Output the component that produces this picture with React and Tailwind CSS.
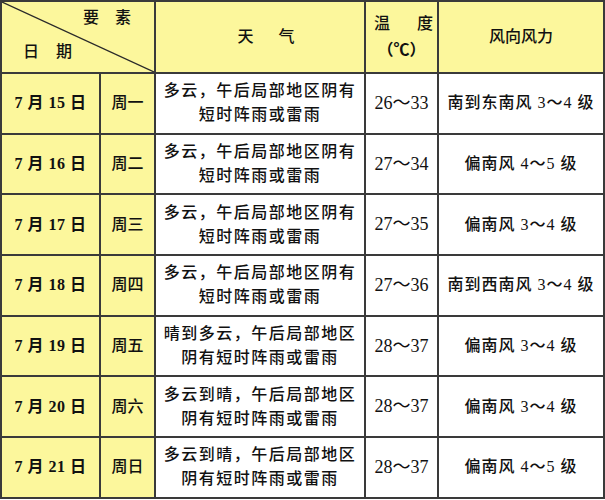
const rows = [
  { date: "7月15日", week: "周一", weather: ["多云，午后局部地区阴有", "短时阵雨或雷雨"], temp: "26～33", wind: "南到东南风3～4级" },
  { date: "7月16日", week: "周二", weather: ["多云，午后局部地区阴有", "短时阵雨或雷雨"], temp: "27～34", wind: "偏南风4～5级" },
  { date: "7月17日", week: "周三", weather: ["多云，午后局部地区阴有", "短时阵雨或雷雨"], temp: "27～35", wind: "偏南风3～4级" },
  { date: "7月18日", week: "周四", weather: ["多云，午后局部地区阴有", "短时阵雨或雷雨"], temp: "27～36", wind: "南到西南风3～4级" },
  { date: "7月19日", week: "周五", weather: ["晴到多云，午后局部地区", "阴有短时阵雨或雷雨"], temp: "28～37", wind: "偏南风3～4级" },
  { date: "7月20日", week: "周六", weather: ["多云到晴，午后局部地区", "阴有短时阵雨或雷雨"], temp: "28～37", wind: "偏南风3～4级" },
  { date: "7月21日", week: "周日", weather: ["多云到晴，午后局部地区", "阴有短时阵雨或雷雨"], temp: "28～37", wind: "偏南风4～5级" },
];

const cell = "border-2 border-[#3a3a3a] p-0 text-center align-middle";
const yellow = "bg-[#fcf79c]";

const App = () => {
  return (
    <div
      className="w-[605px] h-[500px] bg-white text-[#111]"
      style={{ fontFamily: '"Liberation Serif", "Noto Sans CJK SC", serif' }}
    >
      <table className="table-fixed border-collapse w-[603px] border-2 border-[#3a3a3a]">
        <colgroup>
          <col className="w-[99px]" />
          <col className="w-[55px]" />
          <col className="w-[210px]" />
          <col className="w-[73px]" />
          <col className="w-[166px]" />
        </colgroup>
        <thead>
          <tr className="h-[71px]">
            <th colSpan={2} className={`${cell} ${yellow} relative font-medium`}>
              <svg className="absolute inset-0 w-full h-full" viewBox="0 0 154 72" preserveAspectRatio="none">
                <line x1="0" y1="0" x2="154" y2="72" stroke="#2a2a2a" strokeWidth="1.3" />
              </svg>
              <div className="relative h-[70px] text-[16px]">
                <span className="absolute left-[81px] top-[4px] tracking-[16px]">要素</span>
                <span className="absolute left-[21px] top-[38px] tracking-[17px]">日期</span>
              </div>
            </th>
            <th className={`${cell} ${yellow} font-medium text-[16px]`}>
              <span className="tracking-[25px] pl-[37px]">天气</span>
            </th>
            <th className={`${cell} ${yellow} font-medium text-[16px] leading-[26px]`}>
              <div className="flex justify-between pl-[8px] pr-[4px]">
                <span>温</span>
                <span>度</span>
              </div>
              <div className="font-bold">（℃）</div>
            </th>
            <th className={`${cell} ${yellow} font-medium text-[16px]`}>风向风力</th>
          </tr>
        </thead>
        <tbody>
          {rows.map((r) => (
            <tr key={r.date} className="h-[60.7px]">
              <td className={`${cell} ${yellow} font-bold text-[16px] tracking-[0.5px]`}>
                {r.date.replace(/月/, " 月 ").replace(/日/, " 日")}
              </td>
              <td className={`${cell} ${yellow} font-medium text-[16px]`}>{r.week}</td>
              <td className={`${cell} font-medium text-[16px] leading-[24px] tracking-[1.5px] whitespace-nowrap`}>
                <div>{r.weather[0]}</div>
                <div>{r.weather[1]}</div>
              </td>
              <td className={`${cell} text-[18px]`}>{r.temp}</td>
              <td className={`${cell} font-medium text-[16px] tracking-[1px] whitespace-nowrap`}>
                {r.wind.replace(/(\d～\d)/, " $1 ")}
              </td>
            </tr>
          ))}
        </tbody>
      </table>
    </div>
  );
};

export default App;
